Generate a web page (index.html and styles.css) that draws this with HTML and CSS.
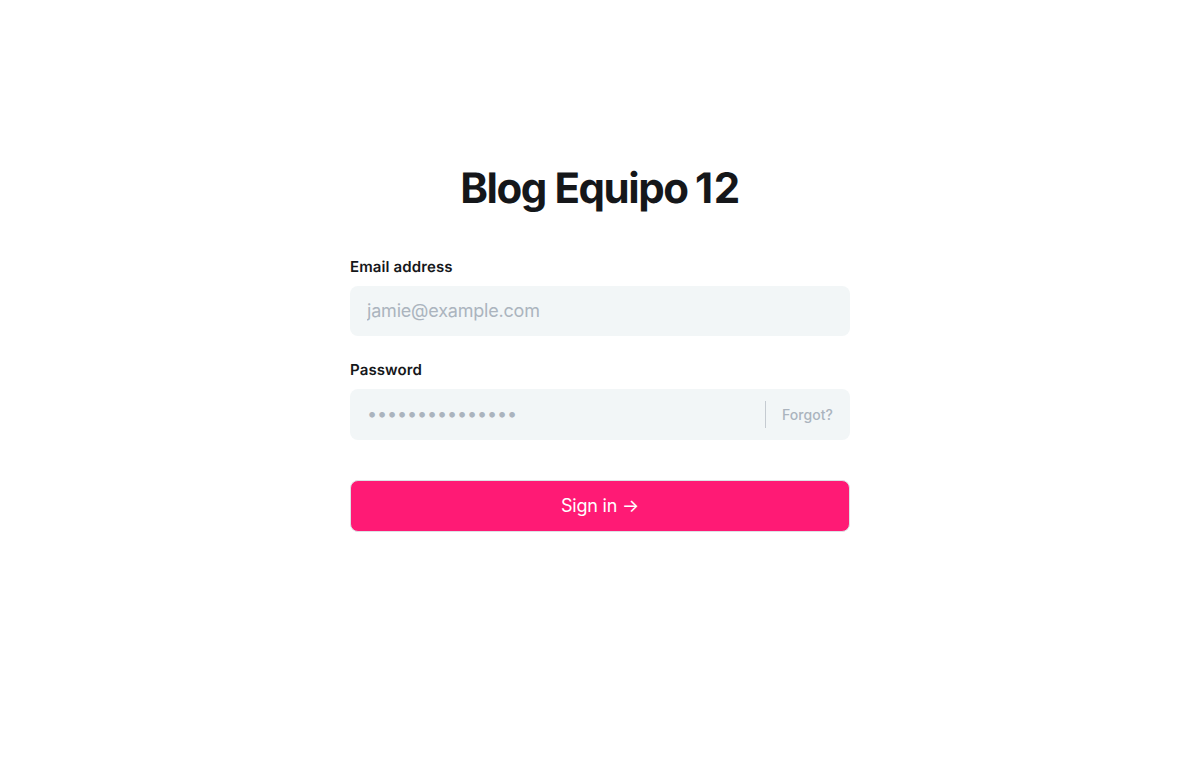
FILE: index.html
```html
<!DOCTYPE html>
<html lang="en">
<head>
<meta charset="utf-8">
<title>Blog Equipo 12</title>
<link rel="stylesheet" href="styles.css">
</head>
<body>
<main class="signin">
  <h1 class="title">Blog Equipo <span class="title-number">12</span></h1>
  <form class="form">
    <label class="label" for="email">Email address</label>
    <input class="field email" id="email" type="email" placeholder="jamie@example.com">
    <label class="label" for="password">Password</label>
    <div class="field password">
      <input class="password-input" id="password" type="password" placeholder="•••••••••••••••">
      <button class="forgot" type="button">Forgot?</button>
    </div>
    <button class="submit" type="button">Sign in →</button>
  </form>
</main>
</body>
</html>
```
FILE: styles.css
```css
* { box-sizing: border-box; }
body {
  margin: 0;
  background: #fff;
  color: #15171a;
  font-family: Inter, "Liberation Sans", sans-serif;
  text-rendering: geometricPrecision;
}
.signin {
  width: 500px;
  margin: 0 auto;
  padding-top: 163px;
}
.title {
  margin: 0 0 43px;
  font-size: 42px;
  line-height: 52px;
  font-weight: 700;
  letter-spacing: -1.45px;
  text-align: center;
}
.title-number { letter-spacing: 0.6px; margin-left: -1px; margin-right: -1px; }
.form { display: flex; flex-direction: column; }
.label {
  font-size: 15px;
  line-height: 18px;
  font-weight: 600;
  letter-spacing: 0.12px;
  margin-bottom: 10px;
}
.field {
  width: 100%;
  height: 50px;
  border: 0;
  border-radius: 8px;
  background: #f2f6f7;
  padding: 0 17px;
  font-family: inherit;
  font-size: 18px;
  letter-spacing: -0.2px;
}
.email { margin-bottom: 25px; padding-bottom: 2px; }
input::placeholder { color: #abb4be; opacity: 1; }
.password { display: flex; align-items: center; height: 51px; }
.password-input {
  flex: 1;
  min-width: 0;
  border: 0;
  padding: 0 0 2px;
  background: transparent;
  font-family: inherit;
  font-size: 18px;
  letter-spacing: -0.12px;
}
.forgot {
  height: 27px;
  border: 0;
  border-left: 1px solid #c5cbd1;
  padding: 0 0 0 16px;
  background: transparent;
  color: #abb4be;
  font-family: inherit;
  font-size: 14px;
  font-weight: 500;
  letter-spacing: 0.04px;
}
.submit {
  height: 52px;
  margin-top: 40px;
  padding: 0 6px 2px;
  border: 1px solid #dde1e5;
  border-radius: 8px;
  background: #ff1a75;
  color: #fff;
  font-family: inherit;
  font-size: 18px;
  letter-spacing: -0.2px;
}
```
